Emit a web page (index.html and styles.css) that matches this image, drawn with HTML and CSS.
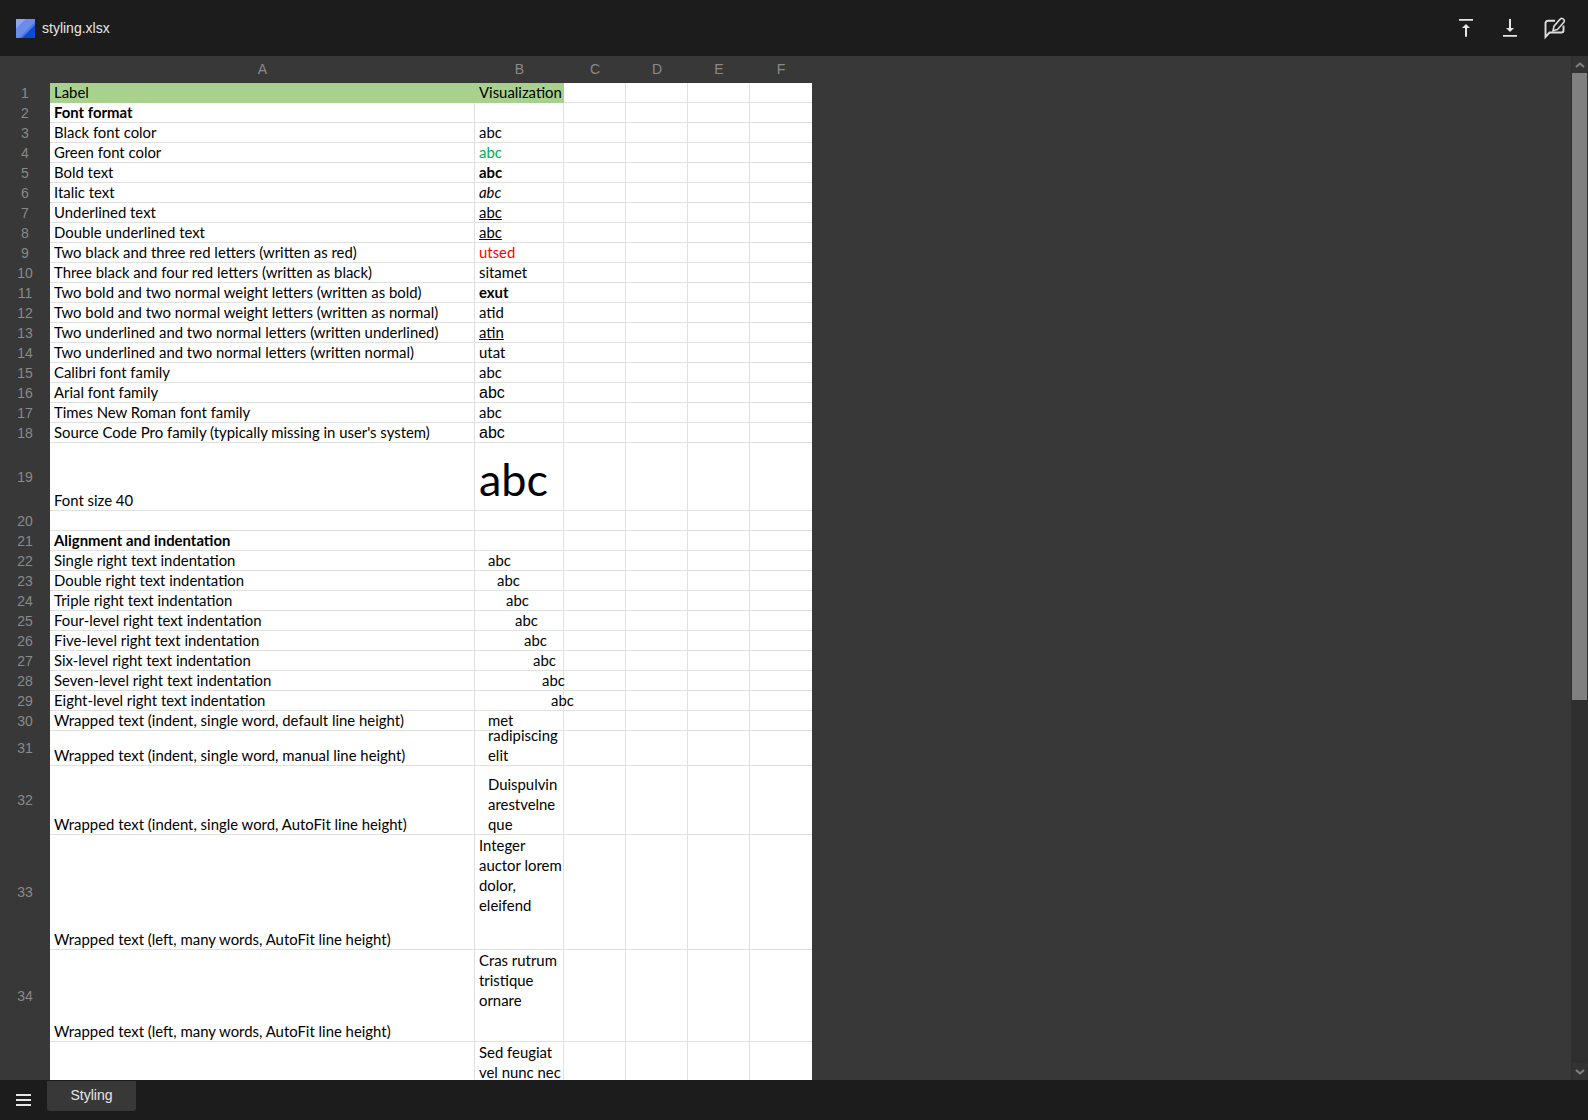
FILE: index.html
```html
<!DOCTYPE html>
<html lang="en">
<head>
  <meta charset="utf-8">
  <title>styling.xlsx</title>
  <link rel="stylesheet" href="styles.css">
</head>
<body>
  <header class="topbar">
    <div class="file">
      <svg class="logo" viewBox="0 0 19 19" width="19" height="19">
        <rect width="19" height="19" rx="1.5" fill="#4f76e3"/>
        <polygon points="0,0 10,0 0,10" fill="#8da6ee"/>
        <polygon points="10,0 19,0 19,3 3,19 0,19 0,10" fill="#6b8ce8"/>
        <polygon points="19,6 19,19 6,19" fill="#0c4bd4"/>
      </svg>
      <span>styling.xlsx</span>
    </div>
    <div class="actions">
      <svg viewBox="0 0 24 24" width="24" height="24">
        <path d="M5 3h14v1.7H5z M8 12l4-4 4 4h-3v8.7h-2V12z" fill="#e6e6e6"/>
      </svg>
      <svg viewBox="0 0 24 24" width="24" height="24">
        <path d="M5 19h14v1.7H5z M11 3h2v9h3l-4 4-4-4h3V3z" fill="#e6e6e6"/>
      </svg>
      <svg viewBox="0 0 24 24" width="24" height="24" fill="none" stroke="#dddddd" stroke-width="1.9">
        <path d="M13 4.8H6a2.5 2.5 0 0 0-2.5 2.5V21l4-4.5h12a2 2 0 0 0 2-2V9.5"/>
        <path d="M17.8 3.6a2.3 2.3 0 0 1 4 2.6L15.6 13.4l-4.6 1.4 1-4.6z" stroke-width="1.6"/>
      </svg>
    </div>
  </header>

  <main class="workspace">
    <div class="sheet">
      <table>
        <colgroup>
          <col class="c-head"><col class="c-a"><col class="c-b"><col class="c-n"><col class="c-n"><col class="c-n"><col class="c-n">
        </colgroup>
        <thead>
          <tr><th></th><th>A</th><th>B</th><th>C</th><th>D</th><th>E</th><th>F</th></tr>
        </thead>
        <tbody>
          <tr><th>1</th><td class="green">Label</td><td class="green">Visualization</td><td></td><td></td><td></td><td></td></tr>
          <tr><th>2</th><td class="bold">Font format</td><td></td><td></td><td></td><td></td><td></td></tr>
          <tr><th>3</th><td>Black font color</td><td>abc</td><td></td><td></td><td></td><td></td></tr>
          <tr><th>4</th><td>Green font color</td><td class="t-green">abc</td><td></td><td></td><td></td><td></td></tr>
          <tr><th>5</th><td>Bold text</td><td class="bold">abc</td><td></td><td></td><td></td><td></td></tr>
          <tr><th>6</th><td>Italic text</td><td class="italic">abc</td><td></td><td></td><td></td><td></td></tr>
          <tr><th>7</th><td>Underlined text</td><td class="under">abc</td><td></td><td></td><td></td><td></td></tr>
          <tr><th>8</th><td>Double underlined text</td><td class="under">abc</td><td></td><td></td><td></td><td></td></tr>
          <tr><th>9</th><td>Two black and three red letters (written as red)</td><td class="t-red">utsed</td><td></td><td></td><td></td><td></td></tr>
          <tr><th>10</th><td>Three black and four red letters (written as black)</td><td>sitamet</td><td></td><td></td><td></td><td></td></tr>
          <tr><th>11</th><td>Two bold and two normal weight letters (written as bold)</td><td class="bold">exut</td><td></td><td></td><td></td><td></td></tr>
          <tr><th>12</th><td>Two bold and two normal weight letters (written as normal)</td><td>atid</td><td></td><td></td><td></td><td></td></tr>
          <tr><th>13</th><td>Two underlined and two normal letters (written underlined)</td><td class="under">atin</td><td></td><td></td><td></td><td></td></tr>
          <tr><th>14</th><td>Two underlined and two normal letters (written normal)</td><td>utat</td><td></td><td></td><td></td><td></td></tr>
          <tr><th>15</th><td>Calibri font family</td><td>abc</td><td></td><td></td><td></td><td></td></tr>
          <tr><th>16</th><td>Arial font family</td><td class="arial">abc</td><td></td><td></td><td></td><td></td></tr>
          <tr><th>17</th><td>Times New Roman font family</td><td>abc</td><td></td><td></td><td></td><td></td></tr>
          <tr><th>18</th><td>Source Code Pro family (typically missing in user's system)</td><td class="arial">abc</td><td></td><td></td><td></td><td></td></tr>
          <tr class="r19"><th>19</th><td>Font size 40</td><td class="huge"><div class="huge-in">abc</div></td><td></td><td></td><td></td><td></td></tr>
          <tr><th>20</th><td></td><td></td><td></td><td></td><td></td><td></td></tr>
          <tr><th>21</th><td class="bold">Alignment and indentation</td><td></td><td></td><td></td><td></td><td></td></tr>
          <tr><th>22</th><td>Single right text indentation</td><td class="i1">abc</td><td></td><td></td><td></td><td></td></tr>
          <tr><th>23</th><td>Double right text indentation</td><td class="i2">abc</td><td></td><td></td><td></td><td></td></tr>
          <tr><th>24</th><td>Triple right text indentation</td><td class="i3">abc</td><td></td><td></td><td></td><td></td></tr>
          <tr><th>25</th><td>Four-level right text indentation</td><td class="i4">abc</td><td></td><td></td><td></td><td></td></tr>
          <tr><th>26</th><td>Five-level right text indentation</td><td class="i5">abc</td><td></td><td></td><td></td><td></td></tr>
          <tr><th>27</th><td>Six-level right text indentation</td><td class="i6">abc</td><td></td><td></td><td></td><td></td></tr>
          <tr><th>28</th><td>Seven-level right text indentation</td><td class="i7">abc</td><td></td><td></td><td></td><td></td></tr>
          <tr><th>29</th><td>Eight-level right text indentation</td><td class="i8">abc</td><td></td><td></td><td></td><td></td></tr>
          <tr><th>30</th><td>Wrapped text (indent, single word, default line height)</td><td class="i1">met</td><td></td><td></td><td></td><td></td></tr>
          <tr class="r31"><th>31</th><td>Wrapped text (indent, single word, manual line height)</td><td class="i1"><div class="squeeze">radipiscing<br>elit</div></td><td></td><td></td><td></td><td></td></tr>
          <tr class="r32"><th>32</th><td>Wrapped text (indent, single word, AutoFit line height)</td><td class="i1 lines">Duispulvin<br>arestvelne<br>que</td><td></td><td></td><td></td><td></td></tr>
          <tr class="r33"><th>33</th><td>Wrapped text (left, many words, AutoFit line height)</td><td class="top lines">Integer<br>auctor lorem<br>dolor,<br>eleifend</td><td></td><td></td><td></td><td></td></tr>
          <tr class="r34"><th>34</th><td>Wrapped text (left, many words, AutoFit line height)</td><td class="top lines">Cras rutrum<br>tristique<br>ornare</td><td></td><td></td><td></td><td></td></tr>
          <tr class="r35"><th></th><td></td><td class="top lines">Sed feugiat<br>vel nunc nec</td><td></td><td></td><td></td><td></td></tr>
        </tbody>
      </table>
    </div>
    <div class="scrollbar">
      <div class="sb-btn">
        <svg viewBox="0 0 10 6" width="10" height="6"><path d="M1 5l4-3.5L9 5" fill="none" stroke="#808080" stroke-width="2"/></svg>
      </div>
      <div class="sb-track"><div class="sb-thumb"></div></div>
      <div class="sb-btn">
        <svg viewBox="0 0 10 6" width="10" height="6"><path d="M1 1l4 3.5L9 1" fill="none" stroke="#808080" stroke-width="2"/></svg>
      </div>
    </div>
  </main>

  <footer class="tabbar">
    <svg class="menu" viewBox="0 0 15 12" width="15" height="12">
      <path d="M0 0h15v2H0z M0 5h15v2H0z M0 10h15v2H0z" fill="#e6e6e6"/>
    </svg>
    <div class="tab">Styling</div>
  </footer>
</body>
</html>
```

FILE: styles.css
```css
html, body {
  height: 100%;
}
body {
  margin: 0;
  height: 100vh;
  display: flex;
  flex-direction: column;
  overflow: hidden;
  background: #383838;
  font-family: "Liberation Sans", Arial, sans-serif;
}

/* top bar */
.topbar {
  flex: 0 0 56px;
  display: flex;
  justify-content: space-between;
  align-items: center;
  padding: 0 22px 0 16px;
  background: #1c1c1c;
  color: #e8e8e8;
  font-size: 14px;
}
.file {
  display: flex;
  align-items: center;
  gap: 7px;
}
.actions {
  display: flex;
  gap: 20px;
}
.actions svg, .logo, .menu {
  display: block;
}

/* sheet */
.workspace {
  flex: 1;
  min-height: 0;
  display: flex;
}
.sheet {
  flex: 1;
  overflow: hidden;
}
table {
  table-layout: fixed;
  width: 812px;
  border-collapse: separate;
  border-spacing: 0;
  font-family: Lato, "Noto Sans", sans-serif;
  font-size: 14.9px;
  color: #000;
}
.c-head { width: 50px; }
.c-a { width: 425px; }
.c-b { width: 89px; }
.c-n { width: 62px; }

th {
  padding: 0 0 1px;
  font-family: "Liberation Sans", Arial, sans-serif;
  font-weight: normal;
  font-size: 14px;
  line-height: 16px;
  color: #8a8a8a;
  vertical-align: middle;
  background: #383838;
}
thead th {
  height: 27px;
  box-sizing: border-box;
  padding-bottom: 2px;
}
td {
  box-sizing: border-box;
  height: 20px;
  padding: 0 0 0 4px;
  line-height: 19px;
  background: #fff;
  border-right: 1px solid #e0e0e0;
  border-bottom: 1px solid #e0e0e0;
  vertical-align: bottom;
  white-space: nowrap;
}
td:last-child {
  border-right: none;
}
tr.r19 td { height: 68px; }
tr.r31 td { height: 35px; }
tr.r32 td { height: 69px; }
tr.r33 td { height: 115px; }
tr.r34 td { height: 92px; }
tr.r35 td { height: 92px; }

.green {
  background: #a9d18e;
  border-right: none;
  border-bottom: none;
  padding-bottom: 1px;
}
.bold { font-weight: 700; }
.italic { font-style: italic; }
.under { text-decoration: underline; }
.t-green { color: #00b050; }
.t-red { color: #ff0000; }
.arial {
  font-family: "Liberation Sans", Arial, sans-serif;
  font-size: 16px;
}
.huge {
  font-size: 45px;
}
.huge-in {
  height: 67px;
  line-height: 73px;
}
.squeeze {
  height: 34px;
  line-height: 20px;
  display: flex;
  flex-direction: column;
  justify-content: flex-end;
}
.lines { line-height: 20px; }
.top { vertical-align: top; }

.i1 { padding-left: 13px; }
.i2 { padding-left: 22px; }
.i3 { padding-left: 31px; }
.i4 { padding-left: 40px; }
.i5 { padding-left: 49px; }
.i6 { padding-left: 58px; }
.i7 { padding-left: 67px; }
.i8 { padding-left: 76px; }

/* scrollbar */
.scrollbar {
  flex: 0 0 17px;
  display: flex;
  flex-direction: column;
  box-sizing: border-box;
  padding: 0 1px;
  background: #2f2f2f;
}
.sb-btn {
  flex: 0 0 17px;
  display: flex;
  align-items: center;
  justify-content: center;
  background: #333;
}
.sb-track {
  flex: 1;
}
.sb-thumb {
  height: 627px;
  background: #808080;
}

/* tabs */
.tabbar {
  flex: 0 0 40px;
  display: flex;
  align-items: flex-start;
  background: #1c1c1c;
}
.menu {
  margin: 14px 16px 0 16px;
}
.tab {
  width: 89px;
  height: 30px;
  margin-top: 1px;
  background: #383838;
  border-radius: 0 0 3px 3px;
  color: #e8e8e8;
  font-size: 14px;
  line-height: 28px;
  text-align: center;
}
```
